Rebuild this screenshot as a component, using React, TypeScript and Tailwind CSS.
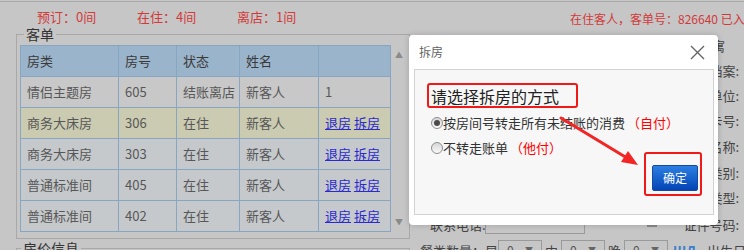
import React from "react";

type Row = {
  type: string;
  no: string;
  status: string;
  name: string;
  done?: string;
  bg: string;
};

const ROWS: Row[] = [
  { type: "情侣主题房", no: "605", status: "结账离店", name: "新客人", done: "1", bg: "bg-[#c8c8c8]" },
  { type: "商务大床房", no: "306", status: "在住", name: "新客人", bg: "bg-[#cbcbb1]" },
  { type: "商务大床房", no: "303", status: "在住", name: "新客人", bg: "bg-[#c6c9cc]" },
  { type: "普通标准间", no: "405", status: "在住", name: "新客人", bg: "bg-[#c6c9cc]" },
  { type: "普通标准间", no: "402", status: "在住", name: "新客人", bg: "bg-[#c6c9cc]" },
];

const SIDE_LABELS = [
  { label: "所属公寓", cls: "h-[25px] pr-[19px]" },
  { label: "会员档案:", cls: "h-[25px] pr-[5px]" },
  { label: "工作单位:", cls: "h-[25px] pr-[5px]" },
  { label: "会员卡号:", cls: "h-[26px] pr-[5px]" },
  { label: "协议名称:", cls: "h-[26px] pr-[5px]" },
  { label: "客人类别:", cls: "h-[25px] pr-[5px]" },
  { label: "证件类型:", cls: "h-[26px] pr-[5px]" },
];

function Radio({ checked }: { checked?: boolean }) {
  return (
    <span className="flex h-[12px] w-[12px] shrink-0 items-center justify-center rounded-full border border-[#8f8f8f] bg-linear-to-b from-[#d6d6d6] to-[#fafafa]">
      {checked ? <span className="h-[6px] w-[6px] rounded-full bg-[#4a4a4a]" /> : null}
    </span>
  );
}

function MiniSelect() {
  return (
    <div className="flex h-[20px] w-[44px] shrink-0 items-center justify-between border border-[#9a9a9a] px-[8px] text-[12px] text-[#555]">
      <span>0</span>
      <span className="text-[8px] text-[#666]">▼</span>
    </div>
  );
}

export default function App() {
  return (
    <div className="relative h-[250px] w-[744px] overflow-hidden bg-[#c6c6c6] font-['Microsoft_YaHei','Noto_Sans_CJK_SC',sans-serif] text-[#444]">
      <div className="h-[2px] border-b border-[#a9a9a9]" />

      {/* stats */}
      <div className="mt-[6px] flex h-[18px] whitespace-nowrap text-[13px] leading-[18px] text-[#d23a3a]">
        <span className="ml-[37px] w-[100px] shrink-0">预订：0间</span>
        <span className="w-[100px] shrink-0">在住：4间</span>
        <span className="w-[100px] shrink-0">离店：1间</span>
        <span className="ml-[233px] shrink-0 pt-[2px] text-[12px]">在住客人，客单号：826640 已入住</span>
      </div>

      <div className="flex">
        {/* left */}
        <div className="w-[410px] shrink-0 pl-[16px]">
          <fieldset className="w-[394px] border border-[#a8a8a8] pb-[6px] pl-[3px]">
            <legend className="ml-[4px] px-[2px] text-[14px] leading-[16px] text-[#333]">客单</legend>
            <div className="mt-[3px] flex">
              <table className="w-[370px] table-fixed border-collapse text-[13px] text-[#575757]">
                <colgroup>
                  <col className="w-[98px]" />
                  <col className="w-[58px]" />
                  <col className="w-[63px]" />
                  <col className="w-[79px]" />
                  <col className="w-[72px]" />
                </colgroup>
                <thead>
                  <tr className="h-[31px] bg-[#9ab4cb] text-[#3a3a3a]">
                    <th className="border border-[#88a6c2] pl-[6px] text-left font-normal">房类</th>
                    <th className="border border-[#88a6c2] pl-[6px] text-left font-normal">房号</th>
                    <th className="border border-[#88a6c2] pl-[6px] text-left font-normal">状态</th>
                    <th className="border border-[#88a6c2] pl-[6px] text-left font-normal">姓名</th>
                    <th className="border border-[#88a6c2] pl-[6px] text-left font-normal"></th>
                  </tr>
                </thead>
                <tbody>
                  {ROWS.map((r) => (
                    <tr key={r.no} className={`h-[31px] ${r.bg}`}>
                      <td className="border border-[#88a6c2] pl-[6px]">{r.type}</td>
                      <td className="border border-[#88a6c2] pl-[6px]">{r.no}</td>
                      <td className="border border-[#88a6c2] pl-[6px] whitespace-nowrap">{r.status}</td>
                      <td className="border border-[#88a6c2] pl-[6px]">{r.name}</td>
                      <td className="border border-[#88a6c2] pl-[6px] whitespace-nowrap">
                        {r.done ? (
                          r.done
                        ) : (
                          <>
                            <a className="text-[#2a2ad0] underline">退房</a>{" "}
                            <a className="text-[#2a2ad0] underline">拆房</a>
                          </>
                        )}
                      </td>
                    </tr>
                  ))}
                </tbody>
              </table>
              <div className="flex w-[16px] flex-col items-center justify-between py-[4px] text-[8px] text-[#8a8a8a]">
                <span>▲</span>
                <span>▼</span>
              </div>
            </div>
          </fieldset>
          <fieldset className="mt-[1px] h-[40px] w-[394px] border border-[#a8a8a8]">
            <legend className="ml-[4px] px-[2px] text-[14px] leading-[16px] text-[#333]">房价信息</legend>
          </fieldset>
        </div>

        {/* right form, mostly behind the dialog */}
        <div className="min-w-0 flex-1 overflow-hidden pt-[7px] text-[13px] text-[#444]">
          {SIDE_LABELS.map((s) => (
            <div key={s.label} className={`flex items-center justify-end whitespace-nowrap ${s.cls}`}>
              {s.label}
            </div>
          ))}
          <div className="flex h-[27px] items-center whitespace-nowrap pr-[5px]">
            <span className="ml-[20px] w-[55px] shrink-0">联系电话:</span>
            <div className="h-[18px] w-[100px] shrink-0 border border-[#9a9a9a]" />
            <span className="ml-[62px] h-[4px] w-[10px] shrink-0 bg-[#8a8a8a]" />
            <span className="ml-auto">证件号码:</span>
          </div>
          <div className="flex h-[22px] items-end whitespace-nowrap pl-[10px]">
            <span>餐类数量：早</span>
            <MiniSelect />
            <span className="mx-[3px]">中</span>
            <MiniSelect />
            <span className="mx-[3px]">晚</span>
            <MiniSelect />
            <span className="ml-[5px] font-bold text-[#3a7fc8]">ШЛ</span>
            <span className="ml-[11px]">出生日期：</span>
          </div>
        </div>
      </div>

      {/* dialog */}
      <div className="absolute left-[409px] top-[35px] h-[190px] w-[309px] rounded-[4px] bg-white shadow-[0_0_6px_rgba(0,0,0,0.18)]">
        <div className="flex h-[34px] items-center justify-between pl-[10px] pr-[13px]">
          <span className="text-[12px] text-[#5f5f5f]">拆房</span>
          <svg width="15" height="15" viewBox="0 0 15 15">
            <path d="M1 1 L14 14 M14 1 L1 14" stroke="#666" strokeWidth="1.4" fill="none" />
          </svg>
        </div>
        <div className="ml-[5px] h-[146px] w-[300px] border border-[#d2d2d2] bg-[#f7f7f7] pl-[12px] pt-[13px]">
          <div className="flex h-[25px] w-[151px] items-center rounded-[3px] border-2 border-[#f01818] pl-[2px] text-[16px] text-[#222]">
            请选择拆房的方式
          </div>
          <div className="mt-[2px] flex h-[25px] items-center pl-[4px] text-[13px] text-[#333]">
            <Radio checked />
            <span>按房间号转走所有未结账的消费</span>
            <span className="ml-[2px] text-[#f00]">（自付）</span>
          </div>
          <div className="flex h-[25px] items-center pl-[4px] text-[13px] text-[#333]">
            <Radio />
            <span>不转走账单</span>
            <span className="ml-[2px] text-[#f00]">（他付）</span>
          </div>
          <div className="mt-[5px] flex justify-end pr-[15px]">
            <div className="relative">
              <button className="flex h-[26px] w-[46px] items-center justify-center rounded-[2px] border border-[#1648a0] bg-linear-to-b from-[#2b7fe2] to-[#0644b6] text-[12px] text-white">
                确定
              </button>
              <div className="absolute -bottom-[5px] -left-[8px] -right-[4px] -top-[13px] rounded-[3px] border-2 border-[#f01818]" />
            </div>
          </div>
        </div>
      </div>

      {/* annotation arrow */}
      <svg className="pointer-events-none absolute left-0 top-0" width="744" height="250">
        <line x1="561" y1="118" x2="627" y2="158" stroke="#f22424" strokeWidth="3" strokeLinecap="round" />
        <polygon points="638,165 621,162 628,151" fill="#f22424" />
      </svg>
    </div>
  );
}
